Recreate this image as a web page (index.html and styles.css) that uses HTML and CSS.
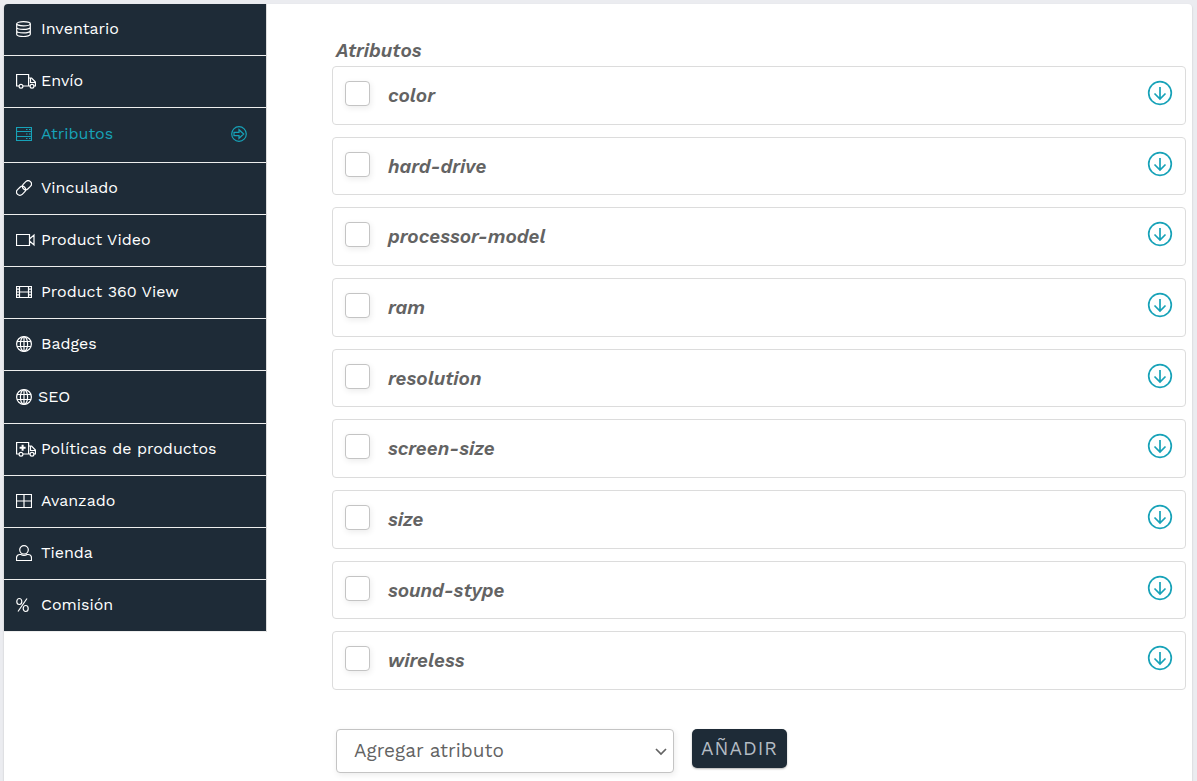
FILE: index.html
```html
<!DOCTYPE html>
<html lang="es">
<head>
  <meta charset="UTF-8" />
  <meta name="viewport" content="width=device-width, initial-scale=1.0" />
  <title>Atributos</title>
  <link rel="stylesheet" href="styles.css">
</head>
<body>
  <!-- icons used more than once -->
  <svg class="icon-defs" width="0" height="0">
    <symbol id="globe" viewBox="0 0 16 16">
      <circle cx="8" cy="8" r="7.4"/>
      <ellipse cx="8" cy="8" rx="3.6" ry="7.4"/>
      <path d="M8 .6v14.8M1 5.500h14M1 10.500h14"/>
    </symbol>
    <symbol id="arrow-down" viewBox="0 0 26 26">
      <circle cx="13" cy="13" r="11.3"/>
      <path d="M13 7v12M7.500 13.500l5.500 5.500 5.500-5.500"/>
    </symbol>
  </svg>

  <div class="panel">
    <nav class="menu">
      <a href="#inventario">
        <svg class="icon" viewBox="0 0 16 16"><ellipse cx="7.500" cy="2.700" rx="6.800" ry="2.100"/><path d="M.700 2.700v10.600c0 2.900 13.600 2.900 13.600 0V2.700M.700 6.200c0 2.900 13.600 2.900 13.600 0M.700 9.700c0 2.900 13.600 2.900 13.600 0"/></svg>
        <span>Inventario</span>
      </a>
      <a href="#envio">
        <svg class="icon" viewBox="0 0 20 16"><path d="M3 13H.600V1.500h12V13H7M12.600 5h3l3.800 4v4H18M12.600 13H14M14.500 5.500v4h4.500"/><circle cx="5" cy="13.200" r="1.900"/><circle cx="16" cy="13.200" r="1.900"/></svg>
        <span>Envío</span>
      </a>
      <a href="#atributos" class="active">
        <svg class="icon" viewBox="0 0 16 16"><path d="M.500 1.500h15v13H.500zM.500 5.500h15M.500 10.500h15M10 3.500h1.500M13 3.500h1.500M10 8h1.500M13 8h1.500M10 12.500h1.500M13 12.500h1.500"/></svg>
        <span>Atributos</span>
        <svg class="icon current" viewBox="0 0 16 16"><circle cx="8" cy="8" r="7.300"/><path d="M3 6.300h5V3.700L12.700 8 8 12.300V9.700H3z"/></svg>
      </a>
      <a href="#vinculado">
        <svg class="icon" viewBox="0 0 16 16"><rect x="5.900" y="1.900" width="10" height="6.600" rx="3.300" transform="rotate(-45 10.900 5.200)"/><rect x=".100" y="7.500" width="10" height="6.600" rx="3.300" transform="rotate(-45 5.100 10.800)"/></svg>
        <span>Vinculado</span>
      </a>
      <a href="#video">
        <svg class="icon" viewBox="0 0 19 16"><path d="M.500 2.500h13v11H.500zM13.500 7l4.500-4v10l-4.500-4"/></svg>
        <span>Product Video</span>
      </a>
      <a href="#view360">
        <svg class="icon" viewBox="0 0 16 16"><path d="M.500 2.500h15v11H.500zM3.500 2.500v11M12.500 2.500v11M3.500 8h9M.500 5.200h3M.500 8h3M.500 10.800h3M12.500 5.200h3M12.500 8h3M12.500 10.800h3"/></svg>
        <span>Product 360 View</span>
      </a>
      <a href="#badges">
        <svg class="icon"><use href="#globe"/></svg>
        <span>Badges</span>
      </a>
      <a href="#seo" class="seo">
        <svg class="icon"><use href="#globe"/></svg>
        <span>SEO</span>
      </a>
      <a href="#politicas">
        <svg class="icon" viewBox="0 0 20 16"><path d="M3 13H.600V1.500h12V13H7M12.600 5h3l3.800 4v4H18M12.600 13H14M14.500 5.500v4h4.500"/><path class="plus" d="M6.600 3.800v6M3.600 6.800h6"/><circle cx="5" cy="13.200" r="1.900"/><circle cx="16" cy="13.200" r="1.900"/></svg>
        <span>Políticas de productos</span>
      </a>
      <a href="#avanzado">
        <svg class="icon" viewBox="0 0 16 16"><path d="M.500 1.500h15v13H.500zM8 1.500v13M.500 8h15"/></svg>
        <span>Avanzado</span>
      </a>
      <a href="#tienda">
        <svg class="icon" viewBox="0 0 16 16"><ellipse cx="8" cy="4.800" rx="4.300" ry="4.200"/><path d="M5 9.500h-1C1.500 9.500.500 11.500.500 13v2.500h15V13c0-1.500-1-3.500-3.500-3.500h-1c-1.500 1.200-4.500 1.200-6 0"/></svg>
        <span>Tienda</span>
      </a>
      <a href="#comision">
        <svg class="icon" viewBox="0 0 16 16"><ellipse cx="3.300" cy="4.500" rx="2.500" ry="3"/><ellipse cx="9.700" cy="11.500" rx="2.500" ry="3"/><path d="M11 1.500l-9 13"/></svg>
        <span>Comisión</span>
      </a>
    </nav>

    <main class="content">
      <h2>Atributos</h2>
      <div class="attributes">
        <div class="attribute">
          <input type="checkbox" id="color">
          <label for="color">color</label>
          <button type="button" class="toggle" aria-label="color"><svg><use href="#arrow-down"/></svg></button>
        </div>
        <div class="attribute">
          <input type="checkbox" id="hard-drive">
          <label for="hard-drive">hard-drive</label>
          <button type="button" class="toggle" aria-label="hard-drive"><svg><use href="#arrow-down"/></svg></button>
        </div>
        <div class="attribute">
          <input type="checkbox" id="processor-model">
          <label for="processor-model">processor-model</label>
          <button type="button" class="toggle" aria-label="processor-model"><svg><use href="#arrow-down"/></svg></button>
        </div>
        <div class="attribute">
          <input type="checkbox" id="ram">
          <label for="ram">ram</label>
          <button type="button" class="toggle" aria-label="ram"><svg><use href="#arrow-down"/></svg></button>
        </div>
        <div class="attribute">
          <input type="checkbox" id="resolution">
          <label for="resolution">resolution</label>
          <button type="button" class="toggle" aria-label="resolution"><svg><use href="#arrow-down"/></svg></button>
        </div>
        <div class="attribute">
          <input type="checkbox" id="screen-size">
          <label for="screen-size">screen-size</label>
          <button type="button" class="toggle" aria-label="screen-size"><svg><use href="#arrow-down"/></svg></button>
        </div>
        <div class="attribute">
          <input type="checkbox" id="size">
          <label for="size">size</label>
          <button type="button" class="toggle" aria-label="size"><svg><use href="#arrow-down"/></svg></button>
        </div>
        <div class="attribute">
          <input type="checkbox" id="sound-stype">
          <label for="sound-stype">sound-stype</label>
          <button type="button" class="toggle" aria-label="sound-stype"><svg><use href="#arrow-down"/></svg></button>
        </div>
        <div class="attribute">
          <input type="checkbox" id="wireless">
          <label for="wireless">wireless</label>
          <button type="button" class="toggle" aria-label="wireless"><svg><use href="#arrow-down"/></svg></button>
        </div>
      </div>

      <form class="add-form">
        <div class="select-wrap">
          <select name="attribute" aria-label="Agregar atributo">
            <option>Agregar atributo</option>
          </select>
          <svg class="chevron" viewBox="0 0 12 8"><path d="M1 1l5 5 5-5"/></svg>
        </div>
        <button type="button" class="add-button">AÑADIR</button>
      </form>
    </main>
  </div>
</body>
</html>
```
FILE: styles.css
```css
* {
  box-sizing: border-box;
}
body {
  margin: 0;
  padding: 4px 5px 0 4px;
  background: #ebecf0;
  color: #636363;
  font-family: "Work Sans", Inter, sans-serif;
  font-size: 16px;
}
svg {
  fill: none;
  stroke: currentColor;
}
.icon-defs {
  position: absolute;
}
.panel {
  display: flex;
  align-items: flex-start;
  min-height: calc(100vh - 4px);
  background: white;
  border-radius: 4px 4px 0 0;
  box-shadow: 0 1px 2px rgba(0,0,0,0.2);
  overflow: hidden;
}

/* left menu */
.menu {
  flex: none;
  width: 263px;
  border-right: 1px solid #ddd;
}
.menu a {
  display: flex;
  align-items: center;
  gap: 9px;
  height: 52px;
  padding: 0 19px 1px 12px;
  border-bottom: 1px solid #eee;
  background: #1e2b37;
  color: white;
  text-decoration: none;
}
.menu a.active {
  height: 55px;
  padding-bottom: 2px;
  color: #17a2b8;
}
.menu a.seo {
  height: 53px;
  padding-bottom: 0;
  gap: 6px;
}
.menu span {
  line-height: 20px;
}
.icon {
  flex: none;
  width: 16px;
  height: 16px;
  stroke-width: 1.2;
}
.icon[viewBox^="0 0 20"] {
  width: 20px;
  margin-right: -4px;
}
.icon[viewBox^="0 0 19"] {
  width: 19px;
  margin-right: -3px;
}
.icon .plus {
  stroke-width: 2;
}
.menu .current {
  margin-left: auto;
}

/* attributes list */
.content {
  flex: 1;
  padding: 36px 6px 8px 65px;
}
.content h2 {
  margin: 0;
  padding: 0 4px;
  font-size: 19px;
  font-style: italic;
  font-weight: 600;
  line-height: 22px;
}
.attributes {
  display: grid;
  grid-auto-rows: 1fr;
  gap: 12px;
  min-height: 624px;
  margin-top: 4px;
}
.attribute {
  display: flex;
  align-items: flex-start;
  padding: 13px 12px 0;
  border: 1px solid #dcdcdc;
  border-radius: 4px;
}
.attribute input {
  appearance: none;
  width: 25px;
  height: 25px;
  margin: 1px 0 0;
  border: 1px solid #c4c4c4;
  border-radius: 4px;
  background: white;
  box-shadow: 1px 2px 6px rgba(0,0,0,0.08);
}
.attribute input:checked {
  background: #17a2b8;
}
.attribute label {
  flex: 1;
  padding-left: 18px;
  font-size: 19px;
  font-style: italic;
  font-weight: 600;
  line-height: 31px;
}
.toggle {
  padding: 0;
  border: none;
  background: none;
  color: #17a2b8;
  cursor: pointer;
}
.toggle svg {
  display: block;
  width: 26px;
  height: 26px;
  stroke-width: 1.7;
}

/* add attribute */
.add-form {
  display: flex;
  align-items: flex-start;
  gap: 18px;
  margin-top: 39px;
  padding-left: 4px;
}
.select-wrap {
  position: relative;
  width: 338px;
}
.select-wrap select {
  appearance: none;
  width: 100%;
  height: 44px;
  padding: 0 17px 2px;
  border: 1px solid #c4c4c4;
  border-radius: 4px;
  background: white;
  box-shadow: 1px 2px 6px rgba(0,0,0,0.08);
  color: #636363;
  font-family: inherit;
  font-size: 19px;
}
.chevron {
  position: absolute;
  top: 19px;
  right: 7px;
  width: 12px;
  height: 8px;
  stroke-width: 1.7;
  pointer-events: none;
}
.add-button {
  height: 39px;
  padding: 0 9px;
  border: none;
  border-radius: 5px;
  background: #1e2b37;
  box-shadow: 0 1px 2px rgba(0,0,0,0.3);
  color: #b4bcc4;
  font-family: inherit;
  font-size: 19px;
  letter-spacing: 1px;
  cursor: pointer;
}
```
